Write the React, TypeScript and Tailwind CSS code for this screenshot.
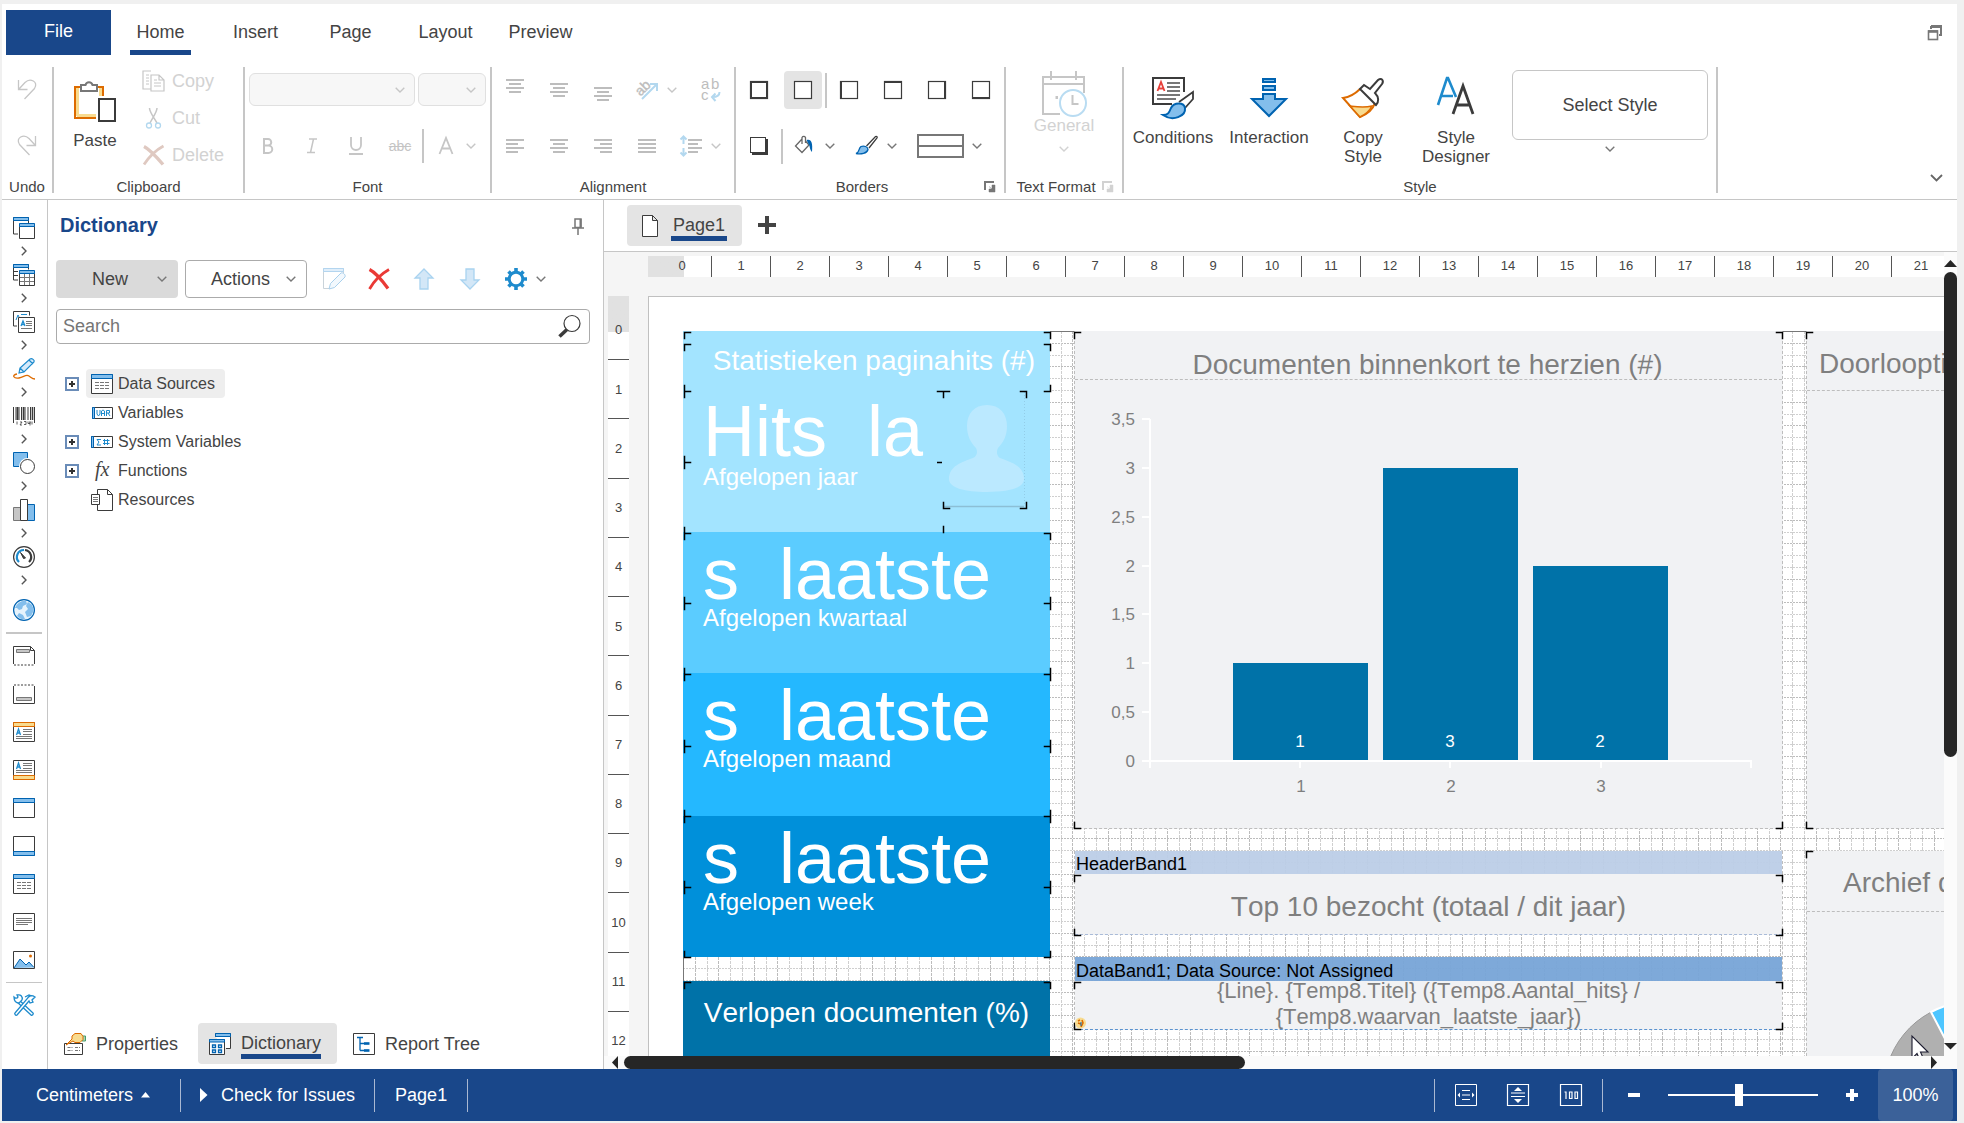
import React from "react";

type Kids = { children?: React.ReactNode };

function Icon({ w = 22, h = 22, children }: { w?: number; h?: number } & Kids) {
  return (
    <svg width={w} height={h} viewBox={`0 0 ${w} ${h}`} fill="none" className="shrink-0 overflow-visible" aria-hidden="true">
      {children}
    </svg>
  );
}

const DARK = "#3b3b3b";
const BLUE = "#0063b1";
const SKY = "#83beec";
const AZURE = "#1e8bcd";
const MUTE = "#c6c6c6";

function Chevron({ color = "#777777" }: { color?: string }) {
  return (
    <Icon w={10} h={6}>
      <path d="M0.7 0.8 5 5 9.3 0.8" stroke={color} strokeWidth="1.4" />
    </Icon>
  );
}

function ChevronRight() {
  return (
    <Icon w={6} h={10}>
      <path d="M0.8 0.7 5 5 0.8 9.3" stroke="#555" strokeWidth="1.4" />
    </Icon>
  );
}

function Launcher({ color }: { color: string }) {
  return (
    <Icon w={12} h={12}>
      <path d="M1 9V1h9" stroke={color} strokeWidth="2" />
      <path d="M5 5.5 8 8M11 4v7H5V8h3V4z" fill={color} stroke={color} strokeWidth="0.5" />
    </Icon>
  );
}

function Sep() {
  return <div className="mt-[7px] h-[126px] w-0.5 shrink-0 bg-[#c6c6c6]" />;
}

function Group({ label, width, launcher, children }: { label: string; width: string; launcher?: string } & Kids) {
  return (
    <section aria-label={label} className={`flex shrink-0 flex-col ${width}`}>
      <div className="h-[116px] pt-0.5">{children}</div>
      <div className="flex h-[22px] items-center text-[15px]">
        <span className={`flex-1 text-center whitespace-nowrap ${launcher ? "pl-1" : ""}`}>{label}</span>
        {launcher && (
          <button type="button" aria-label={`${label} settings`} className="mr-2">
            <Launcher color={launcher} />
          </button>
        )}
      </div>
    </section>
  );
}

function Tool({ label, width = "w-11", on, children }: { label: string; width?: string; on?: boolean } & Kids) {
  return (
    <button type="button" aria-label={label} className={`flex h-[38px] shrink-0 items-center justify-center ${width}`}>
      {on ? (
        <span className="flex h-[38px] w-[38px] items-center justify-center rounded bg-[#e4e4e4]">{children}</span>
      ) : (
        children
      )}
    </button>
  );
}

function DropTool({ label, color, children }: { label: string; color?: string } & Kids) {
  return (
    <button type="button" aria-label={label} className="flex h-[38px] w-[62px] shrink-0 items-center gap-[9px] pl-[11px]">
      {children}
      <Chevron color={color} />
    </button>
  );
}

function Lines({ rows, top = 4 }: { rows: [number, number][]; top?: number }) {
  return (
    <Icon w={18} h={22}>
      {rows.map(([x, w], i) => (
        <rect key={i} x={x} y={top + i * 4} width={w} height="2" fill="#bdbdbd" />
      ))}
    </Icon>
  );
}

const centred: [number, number][] = [[0, 18], [3, 12], [0, 18], [3, 12]];
const leftRows: [number, number][] = [[0, 18], [0, 12], [0, 18], [0, 12]];
const rightRows: [number, number][] = [[0, 18], [6, 12], [0, 18], [6, 12]];
const fullRows: [number, number][] = [[0, 18], [0, 18], [0, 18], [0, 18]];

function Box({ thick }: { thick?: string }) {
  return (
    <Icon w={18} h={18}>
      <rect x="0.5" y="0.5" width="17" height="17" fill="#fff" stroke={DARK} strokeWidth="1.2" />
      {thick && <path d={thick} stroke={DARK} strokeWidth="2" />}
    </Icon>
  );
}

function BigTool({ icon, lines, width }: { icon: React.ReactNode; lines: string[]; width: string }) {
  return (
    <button type="button" className={`flex shrink-0 flex-col items-center pt-[15px] text-[17px] leading-[19px] ${width}`}>
      {icon}
      <span className="mt-[9px] flex flex-col">
        {lines.map((l) => (
          <span key={l}>{l}</span>
        ))}
      </span>
    </button>
  );
}

function Ribbon() {
  return (
    <header className="shrink-0 border-b border-[#c6c6c6] bg-white">
      <div className="flex h-14 items-start">
        <button type="button" className="mt-1.5 ml-1 h-[45px] w-[105px] bg-[#19478a] pb-1 text-lg text-white">
          File
        </button>
        <nav aria-label="Ribbon tabs" className="ml-0.5 flex pt-1.5">
          {["Home", "Insert", "Page", "Layout", "Preview"].map((t, i) => (
            <button key={t} type="button" className="flex w-[95px] justify-center text-lg">
              <span
                className={
                  i === 0
                    ? "h-[45px] border-b-[5px] border-[#19478a] px-1.5 pt-[7px]"
                    : "h-[45px] px-1.5 pt-[7px]"
                }
              >
                <span className="leading-[30px]">{t}</span>
              </span>
            </button>
          ))}
        </nav>
        <button type="button" aria-label="Restore window" className="mt-[21px] mr-3.5 ml-auto">
          <Icon w={16} h={16}>
            <path d="M4 4V2h10v8h-2" stroke="#777" strokeWidth="2" />
            <path d="M4 1.5h11" stroke="#777" strokeWidth="3" />
            <rect x="1.5" y="6" width="9" height="8.5" stroke="#777" strokeWidth="1.6" />
            <path d="M1 6.5h10" stroke="#777" strokeWidth="2.6" />
          </Icon>
        </button>
      </div>

      <div className="flex h-[139px]">
        <Group label="Undo" width="w-[50px]">
          <div className="flex h-14 items-center justify-center">
            <button type="button" aria-label="Undo last change">
              <Icon w={20} h={22}>
                <path d="M1.5 1v9.500h9M2 10 8 3.500c5-5 14-1 9.500 6L7.500 20" stroke={MUTE} strokeWidth="1.3" />
              </Icon>
            </button>
          </div>
          <div className="flex h-14 items-center justify-center">
            <button type="button" aria-label="Redo">
              <Icon w={20} h={22}>
                <path d="M18.500 1v9.500h-9M18 10 12 3.500c-5-5-14-1-9.500 6L12.500 20" stroke={MUTE} strokeWidth="1.3" />
              </Icon>
            </button>
          </div>
        </Group>
        <Sep />

        <Group label="Clipboard" width="w-[189px]">
          <div className="flex">
            <button type="button" className="flex w-[82px] flex-col items-center pt-[18px] text-[17px]">
              <Icon w={42} h={42}>
                <path d="M7 7h-6v31h21" stroke="#dd6b00" strokeWidth="2" />
                <path d="M23 7h6v9" stroke="#dd6b00" strokeWidth="2" />
                <path d="M3.500 8v28M26.500 8v8M3 35.500h19" stroke="#f8db8f" strokeWidth="3" />
                <path d="M7 11V5h4.500a3.600 3.600 0 0 1 7 0H23v6z" fill="#fff" stroke="#777" strokeWidth="2" />
                <rect x="25" y="19" width="16" height="22" fill="#fff" stroke={DARK} strokeWidth="2" />
              </Icon>
              <span className="mt-[7px] leading-6">Paste</span>
            </button>
            <div className="ml-1.5 flex flex-col text-lg text-[#d2d2d2]">
              <button type="button" className="flex h-[37px] items-center gap-1.5">
                <Icon w={24} h={22}>
                  <path d="M9 1H1v18h8M9 5h8l5 5v11H9zM17 5v5h5" stroke={MUTE} strokeWidth="1.2" />
                  <path d="M4 5h3M4 8h3M4 11h3M4 14h3M12 10h3M12 13h7M12 16h7" stroke={MUTE} />
                </Icon>
                Copy
              </button>
              <button type="button" className="flex h-[37px] items-center gap-1.5">
                <Icon w={24} h={22}>
                  <path d="M7.500 1c0 4 4 9 7.500 15M15 1c0 4-4 9-7 15" stroke={MUTE} strokeWidth="1.5" />
                  <circle cx="7" cy="18.500" r="2.500" stroke="#b3d8ef" strokeWidth="1.3" />
                  <circle cx="16" cy="18.500" r="2.500" stroke="#b3d8ef" strokeWidth="1.3" />
                </Icon>
                Cut
              </button>
              <button type="button" className="flex h-[37px] items-center gap-1.5">
                <Icon w={24} h={22}>
                  <path d="M2 2.500c6 3 13 11 19 18" stroke="#dfc9c1" strokeWidth="3.400" />
                  <path d="M21.500 2C14 6 7 13 2 20.500" stroke="#dfc9c1" strokeWidth="2.800" />
                </Icon>
                Delete
              </button>
            </div>
          </div>
        </Group>
        <Sep />

        <Group label="Font" width="w-[245px]">
          <div className="flex h-14 items-center gap-[3px] pr-1 pb-0.5 pl-1">
            <div className="relative w-[166px]">
              <select
                aria-label="Font name"
                className="block h-[33px] w-full appearance-none rounded-md border border-[#e0e0e0] bg-[#f7f7f7]"
              />
              <span className="pointer-events-none absolute top-3.5 right-2.5">
                <Chevron color={MUTE} />
              </span>
            </div>
            <div className="relative flex-1">
              <select
                aria-label="Font size"
                className="block h-[33px] w-full appearance-none rounded-md border border-[#e0e0e0] bg-[#f7f7f7]"
              />
              <span className="pointer-events-none absolute top-3.5 right-2.5">
                <Chevron color={MUTE} />
              </span>
            </div>
          </div>
          <div className="flex h-14 items-center pl-px text-[#c4c4c4]">
            <Tool label="Bold">
              <Icon w={12} h={18}>
                <path d="M2 2v14h4.500a3.500 3.500 0 0 0 0-7.500H2h4a3.200 3.200 0 0 0 0-6.500z" stroke={MUTE} strokeWidth="2" />
              </Icon>
            </Tool>
            <Tool label="Italic">
              <Icon w={12} h={16}>
                <path d="M3 1h8M1 14.500h8M7.500 1 4.500 14.500" stroke={MUTE} strokeWidth="1.500" />
              </Icon>
            </Tool>
            <Tool label="Underline">
              <Icon w={14} h={20}>
                <path d="M2 1v8a5 5 0 0 0 10 0V1M0 18h14" stroke={MUTE} strokeWidth="1.800" />
              </Icon>
            </Tool>
            <Tool label="Strikethrough">
              <span className="text-sm leading-5 line-through">abc</span>
            </Tool>
            <div className="h-[34px] w-0.5 bg-[#c6c6c6]" />
            <DropTool label="Font colour" color={MUTE}>
              <Icon>
                <path d="M4.500 19 11 3l6.500 16M7 13.500h8" stroke={MUTE} strokeWidth="1.800" />
              </Icon>
            </DropTool>
          </div>
        </Group>
        <Sep />

        <Group label="Alignment" width="w-[242px]">
          <div className="flex h-14 items-center pl-px">
            <Tool label="Align top"><Lines rows={centred} top={0} /></Tool>
            <Tool label="Align middle"><Lines rows={centred} top={4} /></Tool>
            <Tool label="Align bottom"><Lines rows={centred} top={8} /></Tool>
            <DropTool label="Text angle" color={MUTE}>
              <Icon>
                <text x="1" y="15" fontSize="14" fill="#bdbdbd" transform="rotate(-45 6 12)" stroke="#bdbdbd" strokeWidth="0.4">ab</text>
                <path d="M6 20 20 6M14 5h7v7" stroke="#b3d8ef" strokeWidth="2" />
              </Icon>
            </DropTool>
            <Tool label="Word wrap" width="w-12">
              <Icon w={20} h={24}>
                <text x="0" y="11" fontSize="15" fill="#bdbdbd">a</text>
                <text x="10" y="11" fontSize="15" fill="#bdbdbd">b</text>
                <text x="0" y="22" fontSize="15" fill="#bdbdbd">c</text>
                <path d="M18.500 14c0 3-2 5-7 5M14.500 15.500 11 19l3.500 4" stroke="#b3d8ef" strokeWidth="2" />
              </Icon>
            </Tool>
          </div>
          <div className="flex h-14 items-center pl-px">
            <Tool label="Align left"><Lines rows={leftRows} /></Tool>
            <Tool label="Align centre"><Lines rows={centred} /></Tool>
            <Tool label="Align right"><Lines rows={rightRows} /></Tool>
            <Tool label="Justify"><Lines rows={fullRows} /></Tool>
            <DropTool label="Line spacing" color={MUTE}>
              <Icon>
                <path d="M8 5h14M8 9h10M8 13h14M8 17h10" stroke="#bdbdbd" strokeWidth="2" />
                <path d="M3.500 2v7M3.500 13v7M0.500 4.500l3-3 3 3M0.500 17.500l3 3 3-3" stroke="#b3d8ef" strokeWidth="2" />
              </Icon>
            </DropTool>
          </div>
        </Group>
        <Sep />

        <Group label="Borders" width="w-[268px]" launcher="#777777">
          <div className="flex h-14 items-center pl-px">
            <Tool label="All borders"><Box thick="M1 1h16v16H1z" /></Tool>
            <Tool label="No border" on><Box /></Tool>
            <div className="h-[35px] w-0.5 bg-[#c6c6c6]" />
            <Tool label="Left border"><Box thick="M1 0v18" /></Tool>
            <Tool label="Top border"><Box thick="M0 1h18" /></Tool>
            <Tool label="Right border"><Box thick="M17 0v18" /></Tool>
            <Tool label="Bottom border"><Box thick="M0 17h18" /></Tool>
          </div>
          <div className="flex h-14 items-center pl-px">
            <Tool label="Shadow">
              <Icon w={18} h={18}>
                <path d="M2 2h16v16H2z" fill={DARK} />
                <rect x="0.500" y="0.500" width="15" height="15" fill="#fff" stroke={DARK} />
              </Icon>
            </Tool>
            <div className="h-[35px] w-0.5 bg-[#c6c6c6]" />
            <DropTool label="Background colour">
              <Icon>
                <path d="M8 4 1.500 11 8 17.500 15 10 11.500 6M8 9V2.500a2 2 0 0 1 3.500 0V8" stroke="#666" strokeWidth="1.300" />
                <path d="M12.500 5c4.500-1.500 6.500 2 5.500 12-2.500-2-2-7-3.500-8z" fill={BLUE} />
              </Icon>
            </DropTool>
            <DropTool label="Border colour">
              <Icon>
                <path d="M10.500 11 19.500 1.500c1.500-.5 2 .5 1.500 1.500L13 13" fill="#fff" stroke={DARK} strokeWidth="1.300" />
                <path d="M0 18.500c4-1 2-5 5-7 3-1 7 0 7 3-1 4-7 5-12 4z" fill={SKY} stroke={BLUE} strokeWidth="1.300" />
              </Icon>
            </DropTool>
            <button type="button" aria-label="Border style" className="flex h-[38px] items-center gap-2 pl-2.5">
              <Icon w={47} h={24}>
                <path d="M1 1h45v22H1zM1 12h45" stroke="#777" strokeWidth="2" />
              </Icon>
              <Chevron />
            </button>
          </div>
        </Group>
        <Sep />

        <Group label="Text Format" width="w-[116px]" launcher="#d2d2d2">
          <button type="button" className="mx-auto flex flex-col items-center pt-[9px] text-[17px] text-[#d2d2d2]">
            <Icon w={46} h={46}>
              <path d="M19 43H2V6h41v16M2 13h41M10 0v9M35 0v9" stroke={MUTE} strokeWidth="2" />
              <path d="M14.500 25h2.500v3h-2.500z" fill={MUTE} />
              <circle cx="32" cy="32" r="13" stroke="#b9dcf2" strokeWidth="2" />
              <path d="M31.500 24v9h6" stroke={MUTE} strokeWidth="2" />
            </Icon>
            <span className="-mt-[3px] leading-6">General</span>
            <span className="mt-2"><Chevron color="#d2d2d2" /></span>
          </button>
        </Group>
        <Sep />

        <Group label="Style" width="w-[592px]">
          <div className="flex items-start pl-px">
            <BigTool
              width="w-24"
              lines={["Conditions"]}
              icon={
                <Icon w={42} h={42}>
                  <path d="M20 27H1V1h31v14" stroke={DARK} strokeWidth="2" />
                  <path d="M5.500 14 9 5l3.500 9M6.500 11.500h5" stroke="#e8403a" strokeWidth="1.800" />
                  <path d="M15 6h13M15 10h13M15 14h13M5 18h23M5 22h19" stroke="#777" strokeWidth="2" />
                  <path d="M27 25 41 15v7L33 31" fill="#fff" stroke={DARK} strokeWidth="1.800" />
                  <path d="M11 38c5 0 6-2 8-7 3-6 13-6 14 0 1 8-12 14-22 7z" fill={SKY} stroke={BLUE} strokeWidth="2" />
                </Icon>
              }
            />
            <BigTool
              width="w-24"
              lines={["Interaction"]}
              icon={
                <Icon w={36} h={42}>
                  <path d="M12 2h12v3H12zM12 9h12v4H12zM12 17h12v5h11L18 39 1 22h11z" fill={SKY} stroke={BLUE} strokeWidth="2" />
                </Icon>
              }
            />
            <BigTool
              width="w-[92px]"
              lines={["Copy", "Style"]}
              icon={
                <Icon w={42} h={42}>
                  <path d="M18 12C12 18 8 20 1 21l17 19c8-3 13-8 15-14" fill="#fff" stroke="#dd6b00" strokeWidth="2" />
                  <path d="M8 29c8 1 14 2 22 0-2 4-6 8-12 11z" fill="#f8db8f" stroke="#dd6b00" strokeWidth="1.500" />
                  <path d="m18 12 4-4 6 4 8-9c4-3 6 1 4 4l-7 9c4 4 4 9 1 12z" fill="#fff" stroke={DARK} strokeWidth="2" />
                </Icon>
              }
            />
            <BigTool
              width="w-[94px]"
              lines={["Style", "Designer"]}
              icon={
                <Icon w={40} h={42}>
                  <path d="M2 28 11 1h1l8 19M5.500 19H17" stroke={AZURE} strokeWidth="2.600" />
                  <path d="M17 37 27 9l10 28M20 28h14" stroke={DARK} strokeWidth="2.800" />
                </Icon>
              }
            />
            <div className="mt-2 ml-[9px] flex flex-1 flex-col items-center pr-2">
              <button type="button" className="h-[70px] w-full rounded-md border border-[#c6c6c6] text-lg">
                Select Style
              </button>
              <button type="button" aria-label="More styles" className="mt-1.5">
                <Chevron />
              </button>
            </div>
          </div>
        </Group>
        <Sep />
        <button type="button" aria-label="Collapse ribbon" className="mr-3.5 mb-[17px] ml-auto self-end">
          <Icon w={13} h={8}>
            <path d="M1 1 6.500 6.500 12 1" stroke="#666" strokeWidth="1.800" />
          </Icon>
        </button>
      </div>
    </header>
  );
}

const railItems: { name: string; art: React.ReactNode }[] = [
  {
    name: "Bands",
    art: (
      <>
        <path d="M5 17H.5V.5h15v6" stroke={DARK} />
        <path d="M.5.5h15v3H.5z" fill={SKY} stroke={BLUE} />
        <path d="M6.500 7h15v14.500h-15z" fill="#fff" stroke={DARK} />
        <path d="M6.500 6.500h15v3h-15z" fill={SKY} stroke={BLUE} />
      </>
    ),
  },
  {
    name: "Cross bands",
    art: (
      <>
        <path d="M5 16H.5V.5h15v5M.5 7.500H5M.5 11.500H5" stroke={DARK} />
        <path d="M.5.5h15v3H.5z" fill={SKY} stroke={BLUE} />
        <path d="M6.500 7h15v14.500h-15z" fill="#fff" stroke={DARK} />
        <path d="M7 13.500h14M7 17.500h14M11.500 10v11M16.500 10v11" stroke="#777" />
        <path d="M6.500 6.500h15v3h-15z" fill={SKY} stroke={BLUE} />
      </>
    ),
  },
  {
    name: "Components",
    art: (
      <>
        <path d="M4 15H.5V.5h16v4" stroke={DARK} />
        <path d="M8 3.500h6M3 9l2-5 1 2" stroke={AZURE} />
        <path d="M5.500 6.500h16v15h-16z" fill="#fff" stroke={DARK} />
        <path d="m8 15 2-5 2 5M9 13.500h2" stroke={AZURE} strokeWidth="1.300" />
        <path d="M13 10.500h6M13 12.500h6M13 14.500h6M8 17.500h11" stroke="#777" />
      </>
    ),
  },
  {
    name: "Signatures",
    art: (
      <>
        <path d="m6 15 1-5L17 1c2-1 5 1 4 3L11 14zM7 10l4 4M16 2l4 4" fill="#d6eafa" stroke={AZURE} strokeWidth="1.200" />
        <path d="M4 16c-6 1-3 5 2 4s7-4 10-2 3 3 6 3" stroke="#dd6b00" strokeWidth="1.300" />
      </>
    ),
  },
  {
    name: "Barcodes",
    art: (
      <>
        <path d="M.5 2v16M3 2v13M6 2v13M8.500 2v13M12 2v13M15 2v13M17.500 2v13M21.500 2v16" stroke={DARK} />
        <path d="M4.500 2v13M10.500 2v13M19.500 2v13" stroke={DARK} strokeWidth="1.600" />
        <path d="M4 16.500v3M7 17h2l-2 3h2M11 16.500h2v3h-2M15 16.500v2h2v-2 4M19 16.500v3" stroke={DARK} strokeWidth=".8" />
      </>
    ),
  },
  {
    name: "Shapes",
    art: (
      <>
        <path d="M.5.5h14v14H.5z" fill={SKY} stroke={BLUE} />
        <circle cx="14.500" cy="14.500" r="8.500" fill="#fff" />
        <circle cx="14.500" cy="14.500" r="7" fill="#fff" stroke={DARK} />
      </>
    ),
  },
  {
    name: "Charts",
    art: (
      <>
        <path d="M.5 8.500h7v13h-7z" fill="#c6c6c6" stroke="#777" />
        <path d="M14.500 5.500h7v16h-7z" fill={SKY} stroke={BLUE} />
        <path d="M7.500.5h7v21h-7z" fill="#fff" stroke={DARK} />
      </>
    ),
  },
  {
    name: "Gauges",
    art: (
      <>
        <circle cx="11" cy="11" r="10.400" stroke={DARK} strokeWidth="1.200" />
        <path d="M6 16a7 7 0 0 1 5-12" stroke={AZURE} strokeWidth="2.200" />
        <path d="M12 4a7 7 0 0 1 4 12" stroke={DARK} strokeWidth="2.200" />
        <path d="m7.500 6.500 5 5.500-2 .5z" fill={DARK} stroke={DARK} />
      </>
    ),
  },
];

const bandItems: { name: string; art: React.ReactNode }[] = [
  {
    name: "Report title",
    art: (
      <>
        <path d="M.5 19V1.500h17l4 4V19M17.500 1.500v4h4" stroke={DARK} />
        <path d="M1 20h20" stroke={DARK} strokeDasharray="2 1.500" />
        <path d="M3.500 4.500h13v3h-13z" fill="#c6c6c6" stroke="#777" />
      </>
    ),
  },
  {
    name: "Report summary",
    art: (
      <>
        <path d="M.5 3v17.500h21V3" stroke={DARK} />
        <path d="M1 2h20" stroke={DARK} strokeDasharray="2 1.500" />
        <path d="M3.500 14.500h15v3h-15z" fill="#c6c6c6" stroke="#777" />
      </>
    ),
  },
  {
    name: "Page header",
    art: (
      <>
        <path d="M.5 1.500h21v19H.5z" stroke={DARK} />
        <path d="M.5 1.500h21v4H.5z" fill="#f8db8f" stroke="#dd6b00" />
        <path d="M3.500 14 5.500 8l2 6M4 12h3" stroke={AZURE} strokeWidth="1.300" />
        <path d="M10 8.500h9M10 10.500h9M10 13.500h9M3 15.500h16M3 17.500h16" stroke="#777" />
      </>
    ),
  },
  {
    name: "Page footer",
    art: (
      <>
        <path d="M.5 1.500h21v19H.5z" stroke={DARK} />
        <path d="M.5 16.500h21v4H.5z" fill="#f8db8f" stroke="#dd6b00" />
        <path d="M3.500 10 5.500 4l2 6M4 8h3" stroke={AZURE} strokeWidth="1.300" />
        <path d="M10 4.500h9M10 6.500h9M10 9.500h9M3 11.500h16M3 13.500h16" stroke="#777" />
      </>
    ),
  },
  {
    name: "Header band",
    art: (
      <>
        <path d="M.5 1.500h21v19H.5z" stroke={DARK} />
        <path d="M.5 1.500h21v4H.5z" fill={SKY} stroke={BLUE} />
      </>
    ),
  },
  {
    name: "Footer band",
    art: (
      <>
        <path d="M.5 1.500h21v19H.5z" stroke={DARK} />
        <path d="M.5 16.500h21v4H.5z" fill={SKY} stroke={BLUE} />
      </>
    ),
  },
  {
    name: "Data band",
    art: (
      <>
        <path d="M.5 1.500h21v19H.5z" stroke={DARK} />
        <path d="M.5 1.500h21v4H.5z" fill={SKY} stroke={BLUE} />
        <path d="M4 9.500h15M4 12.500h15M4 15.500h15" stroke="#777" strokeDasharray="4 1" />
      </>
    ),
  },
  {
    name: "Text",
    art: (
      <>
        <path d="M.5 2.500h21v17H.5z" stroke={DARK} />
        <path d="M3 7.500h16M3 9.500h16M3 11.500h16M3 13.500h12" stroke="#777" />
      </>
    ),
  },
  {
    name: "Image",
    art: (
      <>
        <path d="M1 19 7 10l6 6 3-3 5 5.500" fill={SKY} stroke={BLUE} />
        <path d="M.5 2.500h21v17H.5z" stroke={DARK} />
        <circle cx="17.500" cy="7" r="1.500" fill="#dd6b00" />
      </>
    ),
  },
];

function Rail() {
  return (
    <nav aria-label="Toolbox" className="flex w-[46px] shrink-0 flex-col items-center border-r border-[#c6c6c6] pt-4 pr-px">
      {railItems.map((it) => (
        <button key={it.name} type="button" aria-label={it.name} className="flex shrink-0 flex-col items-center">
          <span className="flex h-6 items-center"><Icon>{it.art}</Icon></span>
          <span className="flex h-[23px] items-center pb-0.5"><ChevronRight /></span>
        </button>
      ))}
      <button type="button" aria-label="Maps" className="flex h-9 shrink-0 items-center">
        <Icon>
          <circle cx="11" cy="11" r="10.400" fill="#e6f3fc" stroke={BLUE} strokeWidth="1.200" />
          <path d="M2 9c2-5 7-8 11-7l1 3-4 2-1 3-3 1-2-2zM15 3l4 3 2 5-3 6-4 1-2-5 3-3-2-3zM6 14l4 2 2 4-4 0-4-3z" fill={SKY} />
        </Icon>
      </button>
      <div className="mt-1 h-0.5 w-9 shrink-0 bg-[#c6c6c6]" />
      <div className="mt-[3px] flex flex-col">
        {bandItems.map((it) => (
          <button key={it.name} type="button" aria-label={it.name} className="flex h-[38px] shrink-0 items-center">
            <Icon>{it.art}</Icon>
          </button>
        ))}
      </div>
      <div className="mt-[3px] h-px w-9 shrink-0 bg-[#c6c6c6]" />
      <button type="button" aria-label="Toolbox setup" className="mt-[3px] flex h-[38px] shrink-0 items-center">
        <Icon>
          <path d="m5 5 15 14c1 1-1 3-2 2L3 7" stroke={AZURE} strokeWidth="1.300" fill="#fff" />
          <path d="M1 3c1 1 3 2 4 0L4 1c4-1 6 2 5 5L6 9C3 9 1 7 1 3z" stroke={AZURE} strokeWidth="1.300" fill="#fff" />
          <path d="M16 7 4 21c-1 1-3-1-2-2L14 5c2-4 5-4 8-2l-3 3 1 2-3 1zM12 3l4-2 3 1" stroke={AZURE} strokeWidth="1.300" fill="#fff" />
        </Icon>
      </button>
    </nav>
  );
}

const tree: { label: string; open: boolean; on?: boolean; art: React.ReactNode }[] = [
  {
    label: "Data Sources",
    open: true,
    on: true,
    art: (
      <>
        <path d="M.5 1.500h21v19H.5z" fill="#fff" stroke={DARK} />
        <path d="M.5 1.500h21v4H.5z" fill={SKY} stroke={BLUE} />
        <path d="M4 9.500h15M4 12.500h15M4 15.500h15" stroke="#777" strokeDasharray="4 1" />
      </>
    ),
  },
  {
    label: "Variables",
    open: false,
    art: (
      <>
        <path d="M1.500 5.500h20v11h-20z" stroke={DARK} />
        <path d="M1.500 5.500h2v11h-2z" fill={SKY} stroke={BLUE} />
        <path d="M6 8v4l1.500 2L9 12V8M10.500 14V9L12 8l1.500 1v5M10.500 11.500h3M15.500 14V8.500h3v2.500h-3M17 11l2 3" stroke={AZURE} />
      </>
    ),
  },
  {
    label: "System Variables",
    open: true,
    art: (
      <>
        <path d="M.5 5.500h21v11H.5z" stroke={DARK} />
        <path d="M.5 5.500h2v11h-2z" fill={SKY} stroke={BLUE} />
        <path d="M10 8.500H6l2 2.500-2 3h4M13.500 8v6M16.500 8v6M12 9.500h6.500M12 12.500h6.500" stroke={AZURE} />
      </>
    ),
  },
  {
    label: "Functions",
    open: true,
    art: (
      <text x="4" y="16" fontSize="20" fontStyle="italic" fill="#444" fontFamily="Liberation Serif, serif">
        fx
      </text>
    ),
  },
  {
    label: "Resources",
    open: false,
    art: (
      <>
        <path d="M6.500 5V.5h10l5 5v16h-15V16M16.500.5v5h5" stroke={DARK} />
        <path d="M.5 5.500h8v10h-8z" fill="#fff" stroke={DARK} />
        <path d="M2 8.500h5M2 10.500h5M2 12.500h5" stroke="#777" />
      </>
    ),
  },
];

function Dictionary() {
  return (
    <aside aria-label="Dictionary" className="flex w-[556px] shrink-0 flex-col border-r border-[#c6c6c6]">
      <div className="flex h-[60px] items-start justify-between pt-[11px] pr-[19px] pl-3">
        <h2 className="text-xl leading-7 font-bold text-[#19478a]">Dictionary</h2>
        <button type="button" aria-label="Pin panel" className="pt-[7px]">
          <Icon w={12} h={17}>
            <path d="M3 1h6v8.500H3zM0 10h12M6 10v7" stroke="#777" strokeWidth="1.500" />
            <path d="M8.500 1v8" stroke="#777" strokeWidth="2" />
          </Icon>
        </button>
      </div>
      <div className="flex h-[38px] shrink-0 items-center pl-2 text-lg">
        <button type="button" className="flex h-[38px] w-[122px] items-center justify-between rounded bg-[#dadada] pr-[11px] pl-9">
          New <Chevron />
        </button>
        <button
          type="button"
          className="ml-[7px] flex h-[38px] w-[122px] items-center justify-between rounded border border-[#ababab] pr-2.5 pl-[25px]"
        >
          Actions <Chevron />
        </button>
        <button type="button" aria-label="Edit" className="flex w-[46px] justify-center pl-2">
          <Icon>
            <path d="M8 20.500H.5V.5h20v5" stroke="#c9d3da" />
            <path d="M.5.5h20v3H.5z" fill="#e0eefa" stroke="#b3d5ef" />
            <path d="m6 21 1.500-5.500L18 5c2-1 5 2 4 4L11.500 19.500z" fill="#f2f8fd" stroke="#a9d0ec" />
          </Icon>
        </button>
        <button type="button" aria-label="Remove" className="flex w-[46px] justify-center pl-1.5">
          <Icon>
            <path d="M1.500 1.500c6 3 12 10 18.500 19" stroke="#ea3a36" strokeWidth="3.200" />
            <path d="M21 1.500C13 6 6 13 1.500 21" stroke="#ea3a36" strokeWidth="2.800" />
          </Icon>
        </button>
        <button type="button" aria-label="Move up" className="flex w-[46px] justify-center pl-1">
          <Icon>
            <path d="m11 1 9 9h-5v11H7V10H2z" fill="#d3e7f7" stroke="#a9d3f0" strokeWidth="1.300" />
          </Icon>
        </button>
        <button type="button" aria-label="Move down" className="flex w-[46px] justify-center pl-1">
          <Icon>
            <path d="m11 21 9-9h-5V1H7v11H2z" fill="#d3e7f7" stroke="#a9d3f0" strokeWidth="1.300" />
          </Icon>
        </button>
        <button type="button" aria-label="Settings" className="ml-3.5 flex items-center gap-[9px]">
          <Icon>
            <circle cx="11" cy="11" r="6.800" stroke={AZURE} strokeWidth="3" />
            <path d="M11 0v4M11 18v4M0 11h4M18 11h4M3.500 3.500l2.500 2.500M16 16l2.500 2.500M3.500 18.500 6 16M16 6l2.500-2.500" stroke={AZURE} strokeWidth="3.600" />
          </Icon>
          <Chevron />
        </button>
      </div>
      <label className="mt-[11px] mr-[13px] ml-2 flex h-[35px] shrink-0 items-center rounded border border-[#ababab] pr-2 pl-1.5">
        <input type="text" placeholder="Search" aria-label="Search" className="min-w-0 flex-1 pb-0.5 text-lg outline-none placeholder:text-[#757575]" />
        <Icon w={23} h={23}>
          <circle cx="14" cy="8.500" r="8" stroke={DARK} strokeWidth="1.200" />
          <path d="M9 14.500 1.500 21.500" stroke={DARK} strokeWidth="3.600" />
        </Icon>
      </label>
      <ul className="mt-[25px] flex flex-1 flex-col pl-[17px] text-base">
        {tree.map((n) => (
          <li key={n.label} className="flex h-[29px] items-center">
            <span className="w-[21px]">
              {n.open && (
                <button type="button" aria-label={`Expand ${n.label}`} className="block">
                  <Icon w={14} h={14}>
                    <path d="M1 1h12v12H1z" stroke="#6a8cb8" strokeWidth="2" />
                    <path d="M4 7h6M7 4v6" stroke="#333" strokeWidth="2" />
                  </Icon>
                </button>
              )}
            </span>
            <button
              type="button"
              className={
                n.on
                  ? "flex h-[29px] items-center gap-[5px] rounded bg-[#eeeeee] pr-2.5 pl-[5px]"
                  : "flex h-[29px] items-center gap-[5px] pr-2 pl-[5px]"
              }
            >
              <Icon>{n.art}</Icon>
              {n.label}
            </button>
          </li>
        ))}
      </ul>
      <div className="mb-[5px] flex h-[41px] shrink-0 items-stretch pl-1.5 text-lg">
        <button type="button" className="flex items-center gap-2.5 pr-5 pl-2.5">
          <Icon>
            <path d="M.5 10.500h18v11H.5z" fill="#fff" stroke={DARK} />
            <path d="M3.500 14.500h5M3.500 17.500h5M11 14.500h5M11 17.500h5" stroke="#777" strokeDasharray="3 1" />
            <path d="M18 3h3.500v5H18z" fill="#a5d8b8" stroke="#4a9c6a" />
            <path d="M2 12 8 6V3l3-2.500h6l2 3v3l-3 3h-5L9 8z" fill="#f8db8f" stroke="#dd6b00" />
          </Icon>
          Properties
        </button>
        <button type="button" className="flex items-center gap-2.5 rounded bg-[#e4e4e4] pr-4 pl-[11px]">
          <Icon>
            <path d="M6.500 4V.5h15v15H17" fill="#fff" stroke={DARK} />
            <path d="M6.500.5h15v3h-15z" fill={SKY} stroke={BLUE} />
            <path d="M.5 6.500h15v15H.5z" fill="#fff" stroke={DARK} />
            <path d="M.5 6.500h15v2.500H.5z" fill={SKY} stroke={BLUE} />
            <path d="M3.500 12h3v2.500h-3zM9.500 12h3v2.500h-3zM3.500 17h3v2.500h-3zM9.500 17h3v2.500h-3z" stroke={BLUE} strokeWidth="1.300" />
          </Icon>
          <span className="mt-[5px] border-b-[5px] border-[#19478a] leading-[21px]">Dictionary</span>
        </button>
        <button type="button" className="flex items-center gap-2.5 pl-4">
          <Icon>
            <path d="M.5.5h21v21H.5z" fill="#fff" stroke={DARK} />
            <path d="M4 4.500h6M7 5v12.500M7 10.500h9M7 17.500h9" stroke={BLUE} strokeWidth="1.300" />
            <path d="M11 10.500h5.500M11 17.500h5.500" stroke={BLUE} strokeWidth="2.600" />
          </Icon>
          Report Tree
        </button>
      </div>
    </aside>
  );
}

function HorizontalRuler() {
  return (
    <div className="mt-1 ml-11 flex h-[21px] shrink-0 overflow-hidden bg-white text-[13px]">
      <div className="w-[5px] shrink-0 bg-[#e1e1e1]" />
      {Array.from({ length: 22 }, (_, i) => (
        <div
          key={i}
          className={
            i === 0
              ? "w-[59px] shrink-0 border-r border-[#555] bg-linear-to-r from-[#e1e1e1] from-[31px] to-white to-[31px] text-center leading-[20px]"
              : "w-[59px] shrink-0 border-r border-[#555] text-center leading-[20px]"
          }
        >
          {i}
        </div>
      ))}
    </div>
  );
}

function VerticalRuler() {
  return (
    <div className="ml-1 w-[21px] shrink-0 overflow-hidden bg-white text-[13px]">
      <div className="h-[5px] bg-[#e1e1e1]" />
      <div className="flex h-[770px] flex-col">
        {Array.from({ length: 13 }, (_, i) => (
          <div
            key={i}
            className={
              i === 0
                ? "flex flex-1 items-center justify-center border-b border-[#555] bg-linear-to-b from-[#e1e1e1] from-[31px] to-white to-[31px]"
                : "flex flex-1 items-center justify-center border-b border-[#555]"
            }
          >
            {i}
          </div>
        ))}
      </div>
    </div>
  );
}

function Grid() {
  const steps = [0, 12, 24, 35, 47];
  return (
    <svg className="absolute top-[34px] left-[34px] h-full w-full" aria-hidden="true">
      <defs>
        <pattern id="grid" width="59" height="59" patternUnits="userSpaceOnUse">
          {steps.map((s, i) => (
            <g key={s} stroke={i % 2 ? "#bcbcbc" : "#cfcfcf"}>
              <path d={`M${s + 0.5} 0V59`} strokeDasharray="3 1" />
              <path d={`M0 ${s + 0.5}H59`} strokeDasharray="2 1" />
            </g>
          ))}
        </pattern>
      </defs>
      <rect width="100%" height="100%" fill="url(#grid)" />
      <path d="M0 .5H3000M.5 0V2000" stroke="#777" />
    </svg>
  );
}

const marks: [number, number, string][] = [
  [35, 35, "RD"], [401, 35, "LD"], [35, 47, "RD"], [401, 47, "LD"],
  [35, 94, "RUD"], [401, 94, "LU"], [294, 94, "LRD"], [377, 94, "LD"],
  [35, 165, "RUD"], [294, 211, "RU"], [377, 211, "LU"], [294, 235, "U"],
  [35, 236, "RUD"], [401, 236, "LDD"], [35, 306, "RUD"], [401, 306, "LUD"],
  [35, 377, "RUD"], [401, 377, "LUD"], [35, 449, "RUD"], [401, 449, "LUD"],
  [35, 519, "RUD"], [401, 519, "LUD"], [35, 590, "RUD"], [401, 590, "LUD"],
  [35, 660, "RU"], [401, 660, "LU"], [35, 685, "RD"], [401, 685, "LD"],
  [425, 35, "RD"], [1133, 35, "LD"], [1157, 35, "RD"],
  [425, 531, "RU"], [1133, 531, "LU"], [1157, 531, "RU"], [1157, 554, "RD"],
  [425, 578, "RD"], [1133, 578, "LD"], [425, 638, "RU"], [1133, 638, "LU"],
  [425, 685, "RD"], [1133, 685, "LD"], [425, 732, "RU"], [1133, 732, "LU"],
];

const arm: Record<string, string> = { L: "h-6", R: "h6", U: "v-6", D: "v6" };

function Marks() {
  return (
    <svg className="pointer-events-none absolute inset-0 h-full w-full" fill="none" aria-hidden="true">
      <path d="M288 165.500h5" stroke="#000" strokeWidth="1.500" />
      <path
        d={marks.map(([x, y, s]) => s.split("").map((c) => `M${x + 0.5} ${y + 0.5}${arm[c]}`).join("")).join("")}
        stroke="#000"
        strokeWidth="1.500"
        strokeLinecap="square"
      />
    </svg>
  );
}

function Tile({ tone, sub }: { tone: string; sub: string }) {
  return (
    <div className={`shrink-0 pt-2.5 pl-5 text-white ${tone}`}>
      <p className="text-[72px] leading-[64px] whitespace-pre">{"s  laatste"}</p>
      <p className="-mt-0.5 text-2xl leading-7">{sub}</p>
    </div>
  );
}

function Chart() {
  const ys = ["3,5", "3", "2,5", "2", "1,5", "1", "0,5", "0"];
  const bars = [
    { x: 158, y: 283, v: 1 },
    { x: 308, y: 88, v: 3 },
    { x: 458, y: 186, v: 2 },
  ];
  return (
    <svg width="707" height="448" viewBox="0 0 707 448" fontSize="17" role="img" aria-label="Bar chart">
      <path d="M75 39V388M67 381H677" stroke="#fff" strokeWidth="2" />
      {ys.map((t, i) => {
        const y = Math.round(39 + i * 48.86);
        return (
          <g key={t}>
            <path d={`M67 ${y}h8`} stroke="#fff" strokeWidth="2" />
            <text x="60" y={y + 6} textAnchor="end" fill="#7f7f7f">{t}</text>
          </g>
        );
      })}
      {[225, 375, 526, 676].map((x) => (
        <path key={x} d={`M${x} 381v7`} stroke="#fff" strokeWidth="2" />
      ))}
      {bars.map((b, i) => (
        <g key={b.x} textAnchor="middle">
          <rect x={b.x} y={b.y} width="135" height={380 - b.y} fill="#0072a8" />
          <text x={b.x + 67} y="367" fill="#fff">{b.v}</text>
          <text x={b.x + 68} y="412" fill="#7f7f7f">{i + 1}</text>
        </g>
      ))}
    </svg>
  );
}

function ReportPage() {
  return (
    <div className="relative ml-[19px] min-w-0 flex-1 overflow-hidden border-t border-l border-[#c0c0c0] bg-white [font-kerning:none]">
      <Grid />

      <div className="absolute top-[34px] left-[34px] flex w-[367px] flex-col text-white">
        <div className="h-[201px] bg-[#a3e4ff] pt-3.5">
          <p className="pr-[15px] text-right text-[28px] leading-8">Statistieken paginahits (#)</p>
          <p className="mt-[22px] pl-5 text-[72px] leading-[64px] whitespace-pre">{"Hits  la"}</p>
          <p className="pl-5 text-2xl leading-7">Afgelopen jaar</p>
        </div>
        <Tile tone="h-[141px] bg-[#5bccff]" sub="Afgelopen kwartaal" />
        <Tile tone="h-[143px] bg-[#24b8ff]" sub="Afgelopen maand" />
        <Tile tone="h-[141px] bg-[#0090da]" sub="Afgelopen week" />
        <div className="mt-6 h-[200px] bg-[#0072a8] pt-4 text-center text-[28px] leading-8">Verlopen documenten (%)</div>
      </div>

      <div className="absolute top-[95px] left-[295px]">
        <Icon w={82} h={118}>
          <path
            d="M43 13c13 0 20 9 20 21 0 10-4 17-9 22-2 4-1 8 2 10 11 4 24 8 24 21 0 9-15 13-37 13S5 96 5 87c0-13 13-17 24-21 4-2 5-6 3-10-5-5-9-12-9-22 0-12 7-21 20-21z"
            fill="#bbe9ff"
          />
          <path d="M0 114.500h80" stroke="#8cbfd6" strokeWidth="1.500" />
          <path d="M80.500 0v114" stroke="#93cde8" strokeDasharray="1 2" />
        </Icon>
      </div>

      <div className="absolute top-[34px] left-[425px] h-[498px] w-[709px] border-x border-b border-dashed border-[#bdbdbd] bg-[#f1f2f4]">
        <div className="h-[49px] border-b border-dashed border-[#bdbdbd] pt-[19px] pr-0.5 text-center text-[28px] leading-[30px] text-[#7f7f7f]">
          Documenten binnenkort te herzien (#)
        </div>
        <Chart />
      </div>

      <div className="absolute top-[554px] left-[425px] flex h-[400px] w-[709px] flex-col border-x border-dashed border-[#bdbdbd] text-black">
        <div className="h-[23px] bg-[#bccde7]/95 pl-px text-lg leading-[27px]">HeaderBand1</div>
        <div className="h-[61px] border-b border-dashed border-[#a9bbd8] bg-[#f1f2f4] pt-[17px] text-center text-[28px] leading-8 text-[#7f7f7f]">
          Top 10 bezocht (totaal / dit jaar)
        </div>
        <div className="mt-[22px] h-6 bg-[#77a4d7]/95 pl-px text-lg leading-[28px] whitespace-nowrap">
          DataBand1; Data Source: Not Assigned
        </div>
        <div className="flex h-[49px] flex-col items-center border-b border-dashed border-[#5b93cf] bg-[#f1f2f4] text-[22px] leading-[26px] text-[#7f7f7f]">
          <span className="-mt-[3px]">{"{Line}. {Temp8.Titel} ({Temp8.Aantal_hits} /"}</span>
          <span>{"{Temp8.waarvan_laatste_jaar})"}</span>
        </div>
      </div>

      <div className="absolute top-[34px] right-0 left-[1157px] h-[498px] overflow-hidden border-b border-l border-dashed border-[#bdbdbd] bg-[#f1f2f4]">
        <div className="h-[60px] border-b border-dashed border-[#bdbdbd] pt-[17px] pl-3 text-[28px] leading-8 whitespace-nowrap text-[#7f7f7f]">
          Doorloopti
        </div>
      </div>

      <div className="absolute top-[554px] right-0 bottom-0 left-[1157px] overflow-hidden border-l border-dashed border-[#bdbdbd] bg-[#f1f2f4]">
        <div className="h-[61px] border-b border-dashed border-[#bdbdbd] pt-4 pl-9 text-[28px] leading-8 whitespace-nowrap text-[#7f7f7f]">
          Archief d
        </div>
        <div className="ml-[75px] h-[145px] w-[180px] overflow-hidden pt-[89px]">
          <Icon w={180} h={180}>
            <circle cx="90" cy="89" r="88" fill="#b0b0b0" stroke="#999" />
            <path d="M90 89 49 11A88 88 0 0 1 130 10z" fill="#4ec6ff" stroke="#fff" strokeWidth="2" />
          </Icon>
        </div>
      </div>

      <Marks />

      <div className="absolute top-[719px] left-[426px]">
        <Icon w={12} h={14}>
          <circle cx="5.500" cy="7" r="5.500" fill="#f8db8f" />
          <path d="M3 5l2-1M7 4l1 3-2 4M3 7l3 1" stroke="#dd6b00" strokeWidth="1.600" />
          <path d="M6 6v4" stroke={BLUE} />
        </Icon>
      </div>
      <div className="absolute top-[738px] left-[1262px]">
        <Icon w={19} h={28}>
          <path d="M1 1v22.500l5-5 4 9 3.500-1.500-4-9H17z" fill="#fff" stroke="#1a1a2e" strokeWidth="1.100" />
        </Icon>
      </div>
    </div>
  );
}

function Workspace() {
  return (
    <main className="flex min-w-0 flex-1 flex-col">
      <div className="flex h-[52px] shrink-0 items-start border-b border-[#c6c6c6] pt-[5px] pl-[23px]">
        <button type="button" className="flex h-[41px] w-[115px] items-center rounded bg-[#e4e4e4] pl-[15px] text-lg">
          <Icon w={16} h={22}>
            <path d="M.5.5h10l5 5v16H.5zM10.500.5v5h5" fill="#fff" stroke={DARK} />
          </Icon>
          <span className="mt-[5px] ml-[13px] border-b-[5px] border-[#19478a] px-0.5 leading-[21px]">Page1</span>
        </button>
        <button type="button" aria-label="Add page" className="mt-[11px] ml-4">
          <Icon w={18} h={18}>
            <path d="M9 0v18M0 9h18" stroke="#444" strokeWidth="4" />
          </Icon>
        </button>
      </div>
      <div className="flex min-h-0 flex-1">
        <div className="flex min-w-0 flex-1 flex-col bg-[#f5f5f5]">
          <HorizontalRuler />
          <div className="mt-[19px] flex min-h-0 flex-1">
            <VerticalRuler />
            <ReportPage />
          </div>
        </div>
        <div className="flex w-[13px] shrink-0 flex-col items-center bg-[#fbfbfb] pt-2 pb-1.5">
          <Icon w={13} h={7}><path d="M0 7 6.500 0 13 7z" fill="#262626" /></Icon>
          <div className="my-[5px] flex w-full flex-1 flex-col">
            <div className="flex-[19] rounded-full bg-[#262626]" />
            <div className="flex-[11]" />
          </div>
          <Icon w={13} h={7}><path d="M0 0 6.500 6.500 13 0z" fill="#262626" /></Icon>
        </div>
      </div>
      <div className="flex h-[13px] shrink-0 items-center bg-[#fbfbfb] pr-5 pl-2">
        <Icon w={6} h={13}><path d="M6 0 0 6.500 6 13z" fill="#262626" /></Icon>
        <div className="ml-1.5 flex h-full flex-1">
          <div className="h-full flex-[19] rounded-full bg-[#262626]" />
          <div className="flex-[21]" />
        </div>
        <Icon w={6} h={13}><path d="M0 0 6 6.500 0 13z" fill="#262626" /></Icon>
      </div>
    </main>
  );
}

function BarSep() {
  return <div className="h-[33px] w-px bg-[#a9b8d2]" />;
}

function StatusBar() {
  return (
    <footer className="flex h-[52px] shrink-0 items-center bg-[#19478a] text-lg text-white">
      <button type="button" className="flex items-center gap-2 pr-[30px] pl-[34px]">
        Centimeters
        <Icon w={9} h={6}><path d="M0 5.500 4.500 0 9 5.500z" fill="#fff" /></Icon>
      </button>
      <BarSep />
      <button type="button" className="flex items-center gap-[13px] pr-[19px] pl-[19px]">
        <Icon w={8} h={14}><path d="M0 0 7.500 7 0 14z" fill="#fff" /></Icon>
        Check for Issues
      </button>
      <BarSep />
      <button type="button" className="px-5">Page1</button>
      <BarSep />
      <div className="ml-auto flex h-full items-center">
        <BarSep />
        <button type="button" aria-label="Fit page width" className="ml-5">
          <Icon w={22} h={22}>
            <path d="M.5.5h21v21H.5zM7 6.500h8M7 11h8M7 15.500h8" stroke="#fff" />
            <path d="M5 8.500v5L2.500 11zM17 8.500v5l2.500-2.500z" fill="#fff" />
          </Icon>
        </button>
        <button type="button" aria-label="Fit page height" className="ml-[30px]">
          <Icon w={22} h={22}>
            <path d="M.5.5h21v21H.5zM4 9h14M4 12.500h14" stroke="#fff" strokeWidth="1.200" />
            <path d="M7 7 11 3l4 4zM7 15l4 4 4-4z" fill="#fff" />
          </Icon>
        </button>
        <button type="button" aria-label="Actual size" className="mr-5 ml-[31px]">
          <Icon w={22} h={22}>
            <path d="M.5.5h21v21H.5zM4.500 8H6v7M9.500 8h2.500v6.500H9.500zM15 8h2.500v6.500H15z" stroke="#fff" strokeWidth="1.200" />
          </Icon>
        </button>
        <BarSep />
        <button type="button" aria-label="Zoom out" className="ml-[25px]">
          <Icon w={12} h={12}><path d="M0 6h12" stroke="#fff" strokeWidth="4" /></Icon>
        </button>
        <input
          type="range"
          aria-label="Zoom"
          min={0}
          max={100}
          defaultValue={47}
          className="mx-7 h-[22px] w-[150px] appearance-none bg-transparent [&::-webkit-slider-runnable-track]:h-[22px] [&::-webkit-slider-runnable-track]:bg-[linear-gradient(to_bottom,transparent_10px,white_10px,white_12px,transparent_12px)] [&::-webkit-slider-thumb]:h-[22px] [&::-webkit-slider-thumb]:w-2 [&::-webkit-slider-thumb]:appearance-none [&::-webkit-slider-thumb]:bg-white"
        />
        <button type="button" aria-label="Zoom in" className="mr-5">
          <Icon w={12} h={12}><path d="M0 6h12M6 0v12" stroke="#fff" strokeWidth="4" /></Icon>
        </button>
        <button type="button" className="mr-1 h-full w-[75px] rounded bg-[#3b6199]">100%</button>
      </div>
    </footer>
  );
}

export default function App() {
  return (
    <div className="flex h-screen flex-col bg-[#f0f0f0] pt-1 pr-[7px] pb-0.5 pl-0.5 font-['Liberation_Sans',Arial,sans-serif] text-[#444444]">
      <Ribbon />
      <div className="flex min-h-0 flex-1 bg-white">
        <Rail />
        <Dictionary />
        <Workspace />
      </div>
      <StatusBar />
    </div>
  );
}
